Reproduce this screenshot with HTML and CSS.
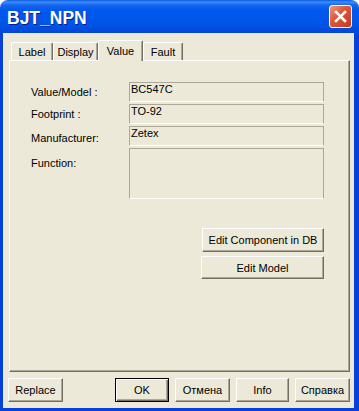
FILE: index.html
```html
<!DOCTYPE html>
<html lang="en">
<head>
    <meta charset="UTF-8">
    <meta name="viewport" content="width=device-width, initial-scale=1.0">
    <title>BJT_NPN</title>
    <link rel="stylesheet" href="styles.css">
</head>
<body>
    <div class="window">
        <div class="titlebar">
            <span class="title">BJT_NPN</span>
            <div class="close">
                <svg width="13" height="13" viewBox="0 0 13 13">
                    <path d="M2 2 L11 11 M11 2 L2 11" stroke="#fff" stroke-width="2.6" stroke-linecap="square"/>
                </svg>
            </div>
        </div>
        <div class="client">
            <div class="tabs">
                <div class="tab tab-label">Label</div>
                <div class="tab tab-display">Display</div>
                <div class="tab tab-value active">Value</div>
                <div class="tab tab-fault">Fault</div>
            </div>
            <div class="panel">
                <div class="form">
                    <div class="label">Value/Model :</div>
                    <div class="field">BC547C</div>
                    <div class="label">Footprint :</div>
                    <div class="field">TO-92</div>
                    <div class="label label-low">Manufacturer:</div>
                    <div class="field">Zetex</div>
                    <div class="label label-lower">Function:</div>
                    <div class="field field-tall"></div>
                    <div class="actions">
                        <button class="btn btn-db">Edit Component in DB</button>
                        <button class="btn btn-model">Edit Model</button>
                    </div>
                </div>
            </div>
            <div class="footer">
                <button class="btn btn-replace">Replace</button>
                <div class="footer-group">
                    <button class="btn btn-default btn-ok">OK</button>
                    <button class="btn btn-cancel">Отмена</button>
                    <button class="btn btn-info">Info</button>
                    <button class="btn btn-help">Справка</button>
                </div>
            </div>
        </div>
    </div>
</body>
</html>
```

FILE: styles.css
```css
body {
    margin: 0;
    background-color: #fff;
    font-family: "Liberation Sans", Arial, sans-serif;
    font-size: 11px;
    color: #000;
}

.window {
    width: 359px;
    height: 411px;
    box-sizing: border-box;
    display: flex;
    flex-direction: column;
    padding: 0 5px 3px 3px;
    border-radius: 8px 8px 0 0;
    background: linear-gradient(to bottom, #0a5ae6 0px, #3d8ef7 2px, #1667f0 5px, #0058ee 10px, #0055e8 24px, #0346d6 33px, #0841d9 33px, #0841d9 100%);
}

.titlebar {
    height: 33px;
    display: flex;
    align-items: center;
    justify-content: space-between;
    padding-left: 4px;
}

.title {
    color: #fff;
    font-weight: bold;
    font-size: 17.5px;
    padding-top: 3px;
    text-shadow: 1px 1px 0 #0a1e8a;
}

.close {
    width: 21px;
    height: 21px;
    margin-right: 2px;
    border: 1px solid #fff;
    border-radius: 3px;
    background: linear-gradient(135deg, #eb9a82 0%, #e0583a 40%, #c8381a 100%);
    display: flex;
    align-items: center;
    justify-content: center;
}

.client {
    flex: 1;
    background-color: #ece9d8;
    display: flex;
    flex-direction: column;
}

.tabs {
    display: flex;
    align-items: flex-end;
    margin: 7px 0 -1px 8px;
    height: 21px;
}

.tab {
    position: relative;
    height: 18px;
    margin-bottom: 1px;
    box-sizing: border-box;
    border-top: 1px solid #fff;
    border-left: 1px solid #fff;
    border-right: 1px solid #716f64;
    box-shadow: inset -1px 0 #aca899;
    border-radius: 2px 2px 0 0;
    display: flex;
    align-items: center;
    justify-content: center;
    padding-top: 1px;
}

.tab-label { width: 42px; }
.tab-display { width: 45px; }
.tab-value { width: 45px; }
.tab-fault { width: 40px; }

.tab.active {
    height: 21px;
    margin-bottom: 0;
    background-color: #ece9d8;
    z-index: 1;
    padding-bottom: 2px;
}

.panel {
    position: relative;
    margin-left: 6px;
    width: 341px;
    height: 312px;
    box-sizing: border-box;
    border-top: 1px solid #fff;
    border-left: 1px solid #fff;
    border-right: 1px solid #716f64;
    border-bottom: 1px solid #716f64;
    box-shadow: inset -1px -1px #aca899;
}

.form {
    display: grid;
    grid-template-columns: 98px 195px;
    row-gap: 2px;
    padding: 21px 0 0 21px;
    align-items: start;
}

.label {
    line-height: 13px;
    padding-top: 4px;
}

.label-low {
    padding-top: 6px;
}

.label-lower {
    padding-top: 9px;
}

.field {
    height: 20px;
    box-sizing: border-box;
    border: 1px solid #aca899;
    border-bottom-color: #fff;
    padding: 0 0 0 1px;
    line-height: 13px;
}

.field-tall {
    height: 51px;
}

.actions {
    grid-column: 2;
    margin-top: 27px;
    display: flex;
    flex-direction: column;
    align-items: flex-end;
    gap: 4px;
}

.btn {
    font-family: "Liberation Sans", Arial, sans-serif;
    font-size: 11px;
    color: #000;
    background-color: #ece9d8;
    height: 24px;
    box-sizing: border-box;
    padding: 0;
    border: 1px solid;
    border-color: #fff #716f64 #716f64 #fff;
    box-shadow: inset -1px -1px #aca899;
}

.btn-db { width: 122px; }
.btn-model { width: 123px; height: 23px; }

.btn-default {
    border-color: #000;
    box-shadow: inset 1px 1px #fff, inset -1px -1px #716f64, inset -2px -2px #aca899;
}

.footer {
    display: flex;
    justify-content: space-between;
    padding: 6px 4px 0 5px;
}

.footer-group {
    display: flex;
    gap: 6px;
}

.btn-replace { width: 55px; }
.btn-ok { width: 54px; }
.btn-cancel { width: 55px; }
.btn-info { width: 53px; }
.btn-help { width: 55px; }
```
